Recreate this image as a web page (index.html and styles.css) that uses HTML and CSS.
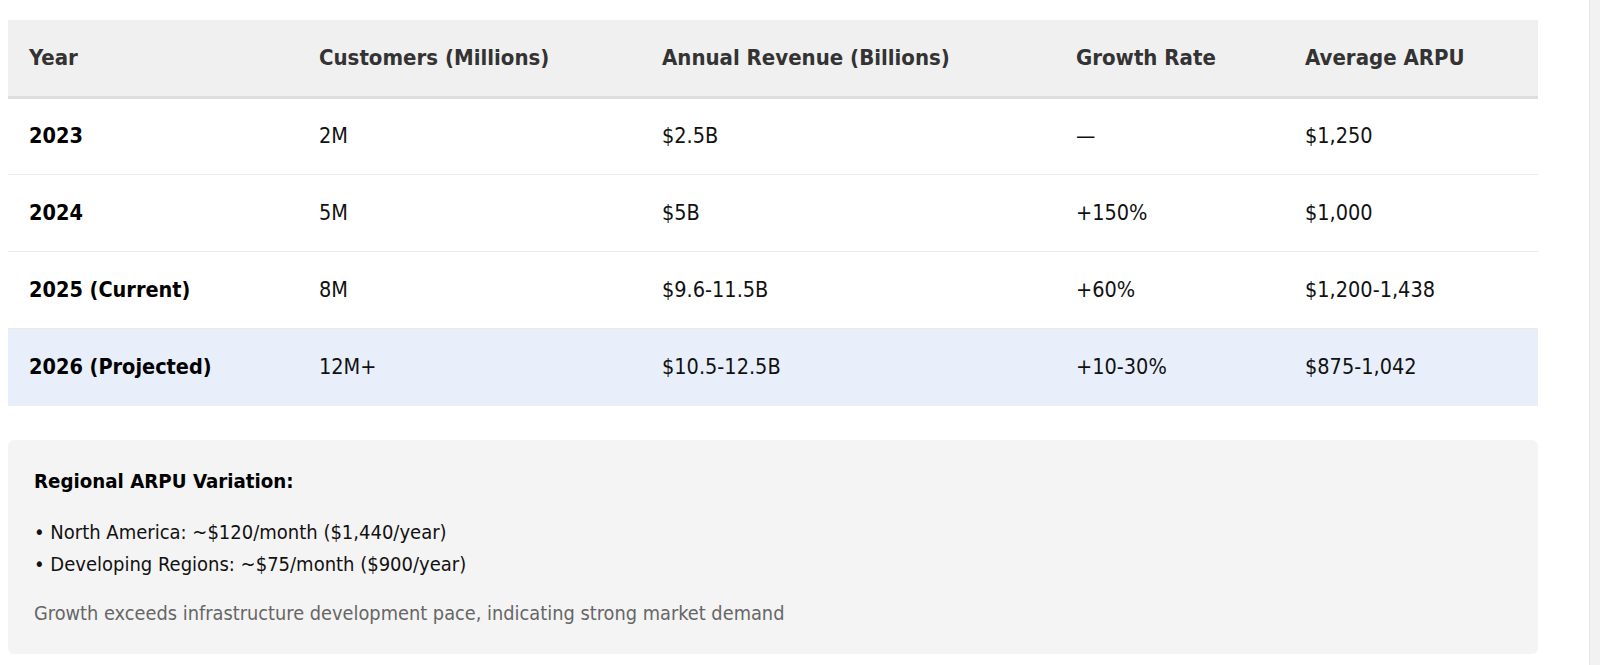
FILE: index.html
```html
<!DOCTYPE html>
<html lang="en">
<head>
<meta charset="utf-8">
<title>ARPU table</title>
<link rel="stylesheet" href="styles.css">
</head>
<body>
<div class="page">
  <main class="content">
    <table class="data">
      <colgroup>
        <col class="c1"><col class="c2"><col class="c3"><col class="c4"><col class="c5">
      </colgroup>
      <thead>
        <tr>
          <th>Year</th>
          <th>Customers (Millions)</th>
          <th>Annual Revenue (Billions)</th>
          <th>Growth Rate</th>
          <th>Average ARPU</th>
        </tr>
      </thead>
      <tbody>
        <tr>
          <td class="yr">2023</td><td>2M</td><td>$2.5B</td><td>—</td><td>$1,250</td>
        </tr>
        <tr>
          <td class="yr">2024</td><td>5M</td><td>$5B</td><td>+150%</td><td>$1,000</td>
        </tr>
        <tr>
          <td class="yr">2025 (Current)</td><td>8M</td><td>$9.6-11.5B</td><td>+60%</td><td>$1,200-1,438</td>
        </tr>
        <tr class="proj">
          <td class="yr">2026 (Projected)</td><td>12M+</td><td>$10.5-12.5B</td><td>+10-30%</td><td>$875-1,042</td>
        </tr>
      </tbody>
    </table>
    <section class="note">
      <h4 class="note-title">Regional ARPU Variation:</h4>
      <div class="note-list">
        <div>• North America: ~$120/month ($1,440/year)</div>
        <div>• Developing Regions: ~$75/month ($900/year)</div>
      </div>
      <p class="note-foot">Growth exceeds infrastructure development pace, indicating strong market demand</p>
    </section>
  </main>
  <div class="rail"></div>
</div>
</body>
</html>
```
FILE: styles.css
```css
* { box-sizing: border-box; }
html, body { margin: 0; padding: 0; background: #fff; }
body {
  font-family: "DejaVu Sans Condensed", "DejaVu Sans", Verdana, sans-serif;
  font-stretch: semi-condensed;
  color: #111;
}
.page {
  display: flex;
  height: 665px;
  overflow: hidden;
}
.content {
  width: 1530px;
  margin: 20px 0 0 8px;
  flex: none;
}
.rail {
  margin-left: auto;
  width: 11px;
  background: #f2f2f2;
  border-left: 1px solid #e6e6e6;
}
.data {
  width: 100%;
  border-collapse: collapse;
  table-layout: fixed;
  font-size: 21.5px;
  line-height: 26px;
}
.c1 { width: 290px; }
.c2 { width: 343px; }
.c3 { width: 414px; }
.c4 { width: 229px; }
.c5 { width: 254px; }
.data th {
  background: #f0f0f0;
  color: #333;
  font-size: 22px;
  font-weight: bold;
  text-align: left;
  padding: 0 21px;
  height: 77px;
  border-bottom: 3px solid #dedede;
}
.data td {
  padding: 0 21px;
  height: 77px;
  border-bottom: 1px solid #eaeaea;
  color: #111;
}
.data td.yr { font-weight: bold; color: #000; }
.data tr.proj td { background: #e8effb; border-bottom: none; height: 78px; }
.note {
  margin-top: 34px;
  background: #f4f4f4;
  border-radius: 6px;
  padding: 29px 26px 26px;
  height: 214px;
}
.note-title {
  margin: 0 0 23px;
  font-size: 20.3px;
  line-height: 24px;
  font-weight: bold;
  color: #000;
}
.note-list {
  font-size: 20px;
  line-height: 32px;
  color: #111;
}
.note-foot {
  margin: 22px 0 0;
  font-size: 19.8px;
  line-height: 24px;
  color: #666;
}
```
